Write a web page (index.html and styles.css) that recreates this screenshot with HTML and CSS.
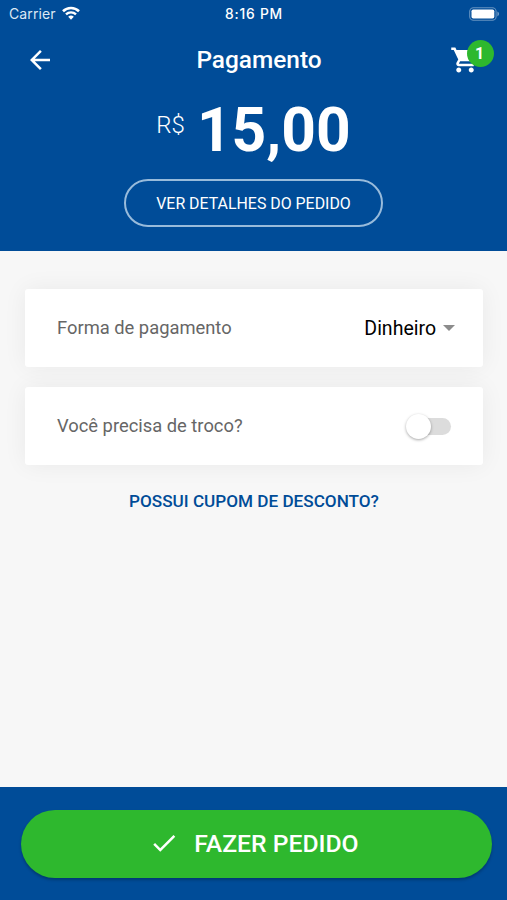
FILE: index.html
```html
<!DOCTYPE html>
<html lang="pt-BR">
<head>
  <meta charset="UTF-8" />
  <meta name="viewport" content="width=device-width, initial-scale=1.0"/>
  <title>Pagamento</title>
  <link rel="stylesheet" href="styles.css">
</head>
<body>
  <div class="app">
    <header class="header">
      <div class="status-bar">
        <div class="carrier">
          <span>Carrier</span>
          <svg class="wifi" viewBox="0 0 18 14">
            <path d="M1 5.2a11.5 11.5 0 0 1 16 0" fill="none" stroke="#fff" stroke-width="2.6"/>
            <path d="M4 8.4a7.2 7.2 0 0 1 10 0" fill="none" stroke="#fff" stroke-width="2.4"/>
            <path d="M6.2 10.8a4.2 4.2 0 0 1 5.6 0L9 13.7z" fill="#fff"/>
          </svg>
        </div>
        <span class="time">8:16 PM</span>
        <svg class="battery" viewBox="0 0 31 14">
          <rect x="0.7" y="0.7" width="26.4" height="12.6" rx="3.8" fill="none" stroke="#fff" stroke-opacity="0.4" stroke-width="1.1"/>
          <rect x="2.5" y="2.4" width="22.8" height="9.2" rx="1.8" fill="#fff"/>
          <path d="M28.4 4.6c2.2.9 2.2 3.9 0 4.8z" fill="#fff" fill-opacity="0.45"/>
        </svg>
      </div>

      <div class="nav">
        <svg class="icon" viewBox="0 0 24 24"><path d="M20 11H7.83l5.59-5.59L12 4l-8 8 8 8 1.41-1.41L7.83 13H20v-2z"/></svg>
        <h1>Pagamento</h1>
        <div class="cart">
          <svg class="icon" viewBox="0 0 24 24"><path d="M7 18c-1.1 0-1.99.9-1.99 2S5.9 22 7 22s2-.9 2-2-.9-2-2-2zM1 2v2h2l3.6 7.59-1.35 2.45c-.16.28-.25.61-.25.96 0 1.1.9 2 2 2h12v-2H7.42c-.14 0-.25-.11-.25-.25l.03-.12.9-1.63h7.45c.75 0 1.41-.41 1.75-1.03l3.58-6.49A1.003 1.003 0 0 0 20 4H5.21l-.94-2H1zm16 16c-1.1 0-1.99.9-1.99 2s.89 2 1.99 2 2-.9 2-2-.9-2-2-2z"/></svg>
          <span class="badge">1</span>
        </div>
      </div>

      <div class="total">
        <span class="currency">R$</span>
        <span class="amount">15,00</span>
      </div>

      <button class="details-btn">VER DETALHES DO PEDIDO</button>
    </header>

    <main class="content">
      <div class="card">
        <span class="label">Forma de pagamento</span>
        <div class="select">
          <span>Dinheiro</span>
          <span class="caret"></span>
        </div>
      </div>

      <div class="card">
        <span class="label">Você precisa de troco?</span>
        <div class="toggle"><span class="knob"></span></div>
      </div>

      <a class="coupon">POSSUI CUPOM DE DESCONTO?</a>
    </main>

    <footer class="footer">
      <button class="order-btn">
        <svg class="check" viewBox="0 0 24 24"><path d="M9 16.17L4.83 12l-1.42 1.41L9 19 21 7l-1.41-1.41z"/></svg>
        <span>FAZER PEDIDO</span>
      </button>
    </footer>
  </div>
</body>
</html>
```
FILE: styles.css
```css
* {
  box-sizing: border-box;
}

body {
  margin: 0;
  font-family: Roboto, sans-serif;
  background: #f7f7f7;
  color: #000;
}

button {
  font-family: inherit;
  padding: 0;
}

.app {
  display: flex;
  flex-direction: column;
  height: 100vh;
}

.header {
  display: flex;
  flex-direction: column;
  align-items: center;
  height: 251px;
  background: #004c98;
  color: #fff;
}

.status-bar {
  display: grid;
  grid-template-columns: 1fr auto 1fr;
  align-items: center;
  width: 100%;
  height: 27px;
  padding: 0 7px 0 9px;
  font-family: Inter, sans-serif;
  font-size: 14px;
}

.carrier {
  display: flex;
  align-items: center;
  gap: 6px;
  color: #dce8f4;
  letter-spacing: 0.1px;
}

.wifi {
  width: 18px;
  height: 14px;
  margin-top: -2px;
}

.time {
  margin-right: 1px;
  font-weight: 500;
  font-size: 13.8px;
  letter-spacing: 0.8px;
}

.battery {
  justify-self: end;
  width: 31px;
  height: 14px;
}

.nav {
  display: grid;
  grid-template-columns: 30px 1fr 30px;
  align-items: center;
  width: 100%;
  height: 66px;
  padding: 0 27px 0 25px;
}

.nav h1 {
  margin: 0;
  padding: 0 0 2px 13px;
  font-size: 24.4px;
  font-weight: 500;
  text-align: center;
}

.icon {
  display: block;
  width: 30px;
  height: 30px;
  fill: #fff;
}

.cart {
  position: relative;
}

.badge {
  position: absolute;
  top: -5px;
  right: -14px;
  width: 27px;
  height: 27px;
  padding-right: 2px;
  border-radius: 50%;
  background: #2eb82e;
  font-size: 16px;
  font-weight: 700;
  line-height: 27px;
  text-align: center;
}

.total {
  display: flex;
  align-items: flex-start;
  gap: 12px;
  height: 86px;
}

.currency {
  margin-top: 18px;
  font-size: 24px;
  font-weight: 300;
}

.amount {
  margin-top: 2px;
  font-size: 60.5px;
  font-weight: 700;
}

.details-btn {
  width: 259px;
  height: 48px;
  border: 2px solid #98bbdb;
  border-radius: 24px;
  background: none;
  color: #fff;
  font-size: 15.9px;
}

.content {
  display: flex;
  flex: 1;
  flex-direction: column;
  gap: 20px;
  padding: 38px 24px 0 25px;
}

.card {
  display: flex;
  align-items: center;
  justify-content: space-between;
  height: 78px;
  padding: 0 28px 0 32px;
  border-radius: 3px;
  background: #fff;
  box-shadow: 0 0 25px rgba(0, 0, 0, 0.06);
}

.label {
  padding-bottom: 2px;
  color: #666;
  font-size: 18.35px;
}

.select {
  display: flex;
  align-items: center;
  gap: 7px;
  font-size: 19.5px;
}

.caret {
  border: 6px solid transparent;
  border-top-color: #8c8c8c;
  border-bottom: none;
}

.toggle {
  position: relative;
  width: 42px;
  height: 17px;
  margin-right: 4px;
  border-radius: 9px;
  background: #dcdcdc;
}

.knob {
  position: absolute;
  top: -4px;
  left: -3px;
  width: 25px;
  height: 25px;
  border-radius: 50%;
  background: #fff;
  box-shadow: 0 1px 3px rgba(0, 0, 0, 0.35);
}

.coupon {
  align-self: center;
  margin-top: 6px;
  color: #004c98;
  font-size: 17.15px;
  font-weight: 500;
}

.footer {
  height: 113px;
  padding: 23px 15px 0 21px;
  background: #004c98;
}

.order-btn {
  display: flex;
  align-items: center;
  justify-content: center;
  gap: 15px;
  width: 100%;
  height: 68px;
  padding: 0 5px 2px 0;
  border: none;
  border-radius: 34px;
  background: #2eb82e;
  box-shadow: 0 2px 3px rgba(0, 0, 0, 0.25);
  color: #fff;
  font-size: 24.7px;
  font-weight: 500;
}

.check {
  width: 30px;
  height: 30px;
  fill: #fff;
}
```
